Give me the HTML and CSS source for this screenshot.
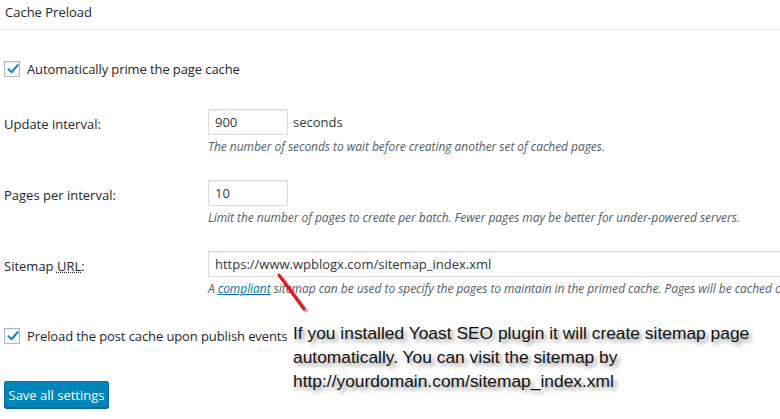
FILE: index.html
```html
<!DOCTYPE html>
<html lang="en">
<head>
  <meta charset="UTF-8" />
  <meta name="viewport" content="width=device-width, initial-scale=1.0"/>
  <title>Cache Preload</title>
  <link rel="stylesheet" href="styles.css">
</head>
<body>

  <div class="title">Cache Preload</div>

  <!-- Opciones de precarga -->
  <label class="check-row first">
    <span class="checkbox">
      <svg viewBox="0 0 16 16" width="16" height="16"><path d="M3.5 8.2 L6.6 11.2 L12.6 4.2" fill="none" stroke="#1e8cbe" stroke-width="2.2" stroke-linecap="round" stroke-linejoin="round"/></svg>
    </span>
    Automatically prime the page cache
  </label>

  <div class="field first-field">
    <div class="field-label">Update interval:</div>
    <div class="field-body">
      <div class="input-line"><span class="input short">900</span><span class="unit">seconds</span></div>
      <p class="description">The number of seconds to wait before creating another set of cached pages.</p>
    </div>
  </div>

  <div class="field">
    <div class="field-label">Pages per interval:</div>
    <div class="field-body">
      <div class="input-line"><span class="input short">10</span></div>
      <p class="description">Limit the number of pages to create per batch. Fewer pages may be better for under-powered servers.</p>
    </div>
  </div>

  <div class="field">
    <div class="field-label">Sitemap <abbr title="Uniform Resource Locator">URL</abbr>:</div>
    <div class="field-body">
      <div class="input-line"><span class="input wide">https://www.wpblogx.com/sitemap_index.xml</span></div>
      <p class="description">A <a href="#">compliant</a> sitemap can be used to specify the pages to maintain in the primed cache. Pages will be cached o</p>
    </div>
  </div>

  <label class="check-row second">
    <span class="checkbox">
      <svg viewBox="0 0 16 16" width="16" height="16"><path d="M3.5 8.2 L6.6 11.2 L12.6 4.2" fill="none" stroke="#1e8cbe" stroke-width="2.2" stroke-linecap="round" stroke-linejoin="round"/></svg>
    </span>
    Preload the post cache upon publish events
  </label>

  <button class="button-primary">Save all settings</button>

  <!-- Anotacion sobre la captura -->
  <svg class="arrow" width="36" height="44" viewBox="0 0 36 44">
    <line x1="5" y1="4" x2="30" y2="38" stroke="rgba(0,0,0,0.25)" stroke-width="4" transform="translate(2,2)"/>
    <line x1="4" y1="3" x2="29" y2="37" stroke="#e3141c" stroke-width="3" stroke-linecap="round"/>
  </svg>

  <div class="note">
    If you installed Yoast SEO plugin it will create sitemap page<br>
    automatically. You can visit the sitemap by<br>
    http://yourdomain.com/sitemap_index.xml
  </div>

</body>
</html>
```

FILE: styles.css
```css
body {
  margin: 0;
  background: #fff;
  color: #23282d;
  font-family: "Open Sans", "Noto Sans", sans-serif;
  font-size: 13px;
  overflow: hidden;
  position: relative;
  width: 780px;
  height: 419px;
}

.title {
  height: 29px;
  line-height: 25px;
  padding-left: 5px;
  border-bottom: 1px solid #e8e8e8;
  font-size: 13px;
}

/* Checkboxes */
.check-row {
  display: flex;
  align-items: center;
  gap: 7px;
  padding-left: 4px;
  height: 16px;
  white-space: nowrap;
  letter-spacing: -0.1px;
}

.check-row.first { margin-top: 31px; }
.check-row.second { margin-top: 31px; }

.checkbox {
  display: block;
  width: 14px;
  height: 14px;
  border: 1px solid #b4b9be;
  background: #fff;
  box-shadow: inset 0 1px 2px rgba(0,0,0,.1);
  position: relative;
}

.checkbox svg {
  position: absolute;
  top: -1px;
  left: 0;
}

/* Campos */
.field {
  display: flex;
  margin-top: 25px;
}

.field.first-field { margin-top: 32px; }

.field-label {
  width: 204px;
  padding-left: 4px;
  padding-top: 6px;
  flex-shrink: 0;
}

.field-body {
  white-space: nowrap;
}

.input-line {
  display: flex;
  align-items: center;
}

.input {
  display: block;
  box-sizing: border-box;
  height: 26px;
  line-height: 24px;
  padding: 0 6px;
  border: 1px solid #dcdcdc;
  box-shadow: inset 0 1px 2px rgba(0,0,0,.07);
  color: #32373c;
  font-size: 13px;
  background: #fff;
}

.input.short { width: 80px; }
.input.wide { width: 580px; }

.unit {
  margin-left: 5px;
  color: #32373c;
}

.description {
  margin: 3px 0 0;
  line-height: 17px;
  font-style: italic;
  font-size: 12px;
  letter-spacing: -0.05px;
  color: #555d66;
}

.description a {
  color: #0073aa;
}

abbr {
  text-decoration: underline dotted;
}

.button-primary {
  display: block;
  margin: 37px 0 0 4px;
  height: 27px;
  width: 105px;
  padding: 0;
  background: #0085ba;
  border: 1px solid;
  border-color: #0073aa #006799 #006799;
  border-radius: 3px;
  box-shadow: 0 1px 0 #006799;
  color: #fff;
  font-family: "Open Sans", "Noto Sans", sans-serif;
  font-size: 13px;
}

/* Anotacion */
.arrow {
  position: absolute;
  left: 275px;
  top: 272px;
}

.note {
  position: absolute;
  left: 293px;
  top: 321px;
  font-family: "Liberation Sans", Arial, sans-serif;
  font-size: 17.4px;
  line-height: 24px;
  color: #111;
  white-space: nowrap;
  text-shadow: 3px 3px 4px rgba(0,0,0,0.45);
}
```
